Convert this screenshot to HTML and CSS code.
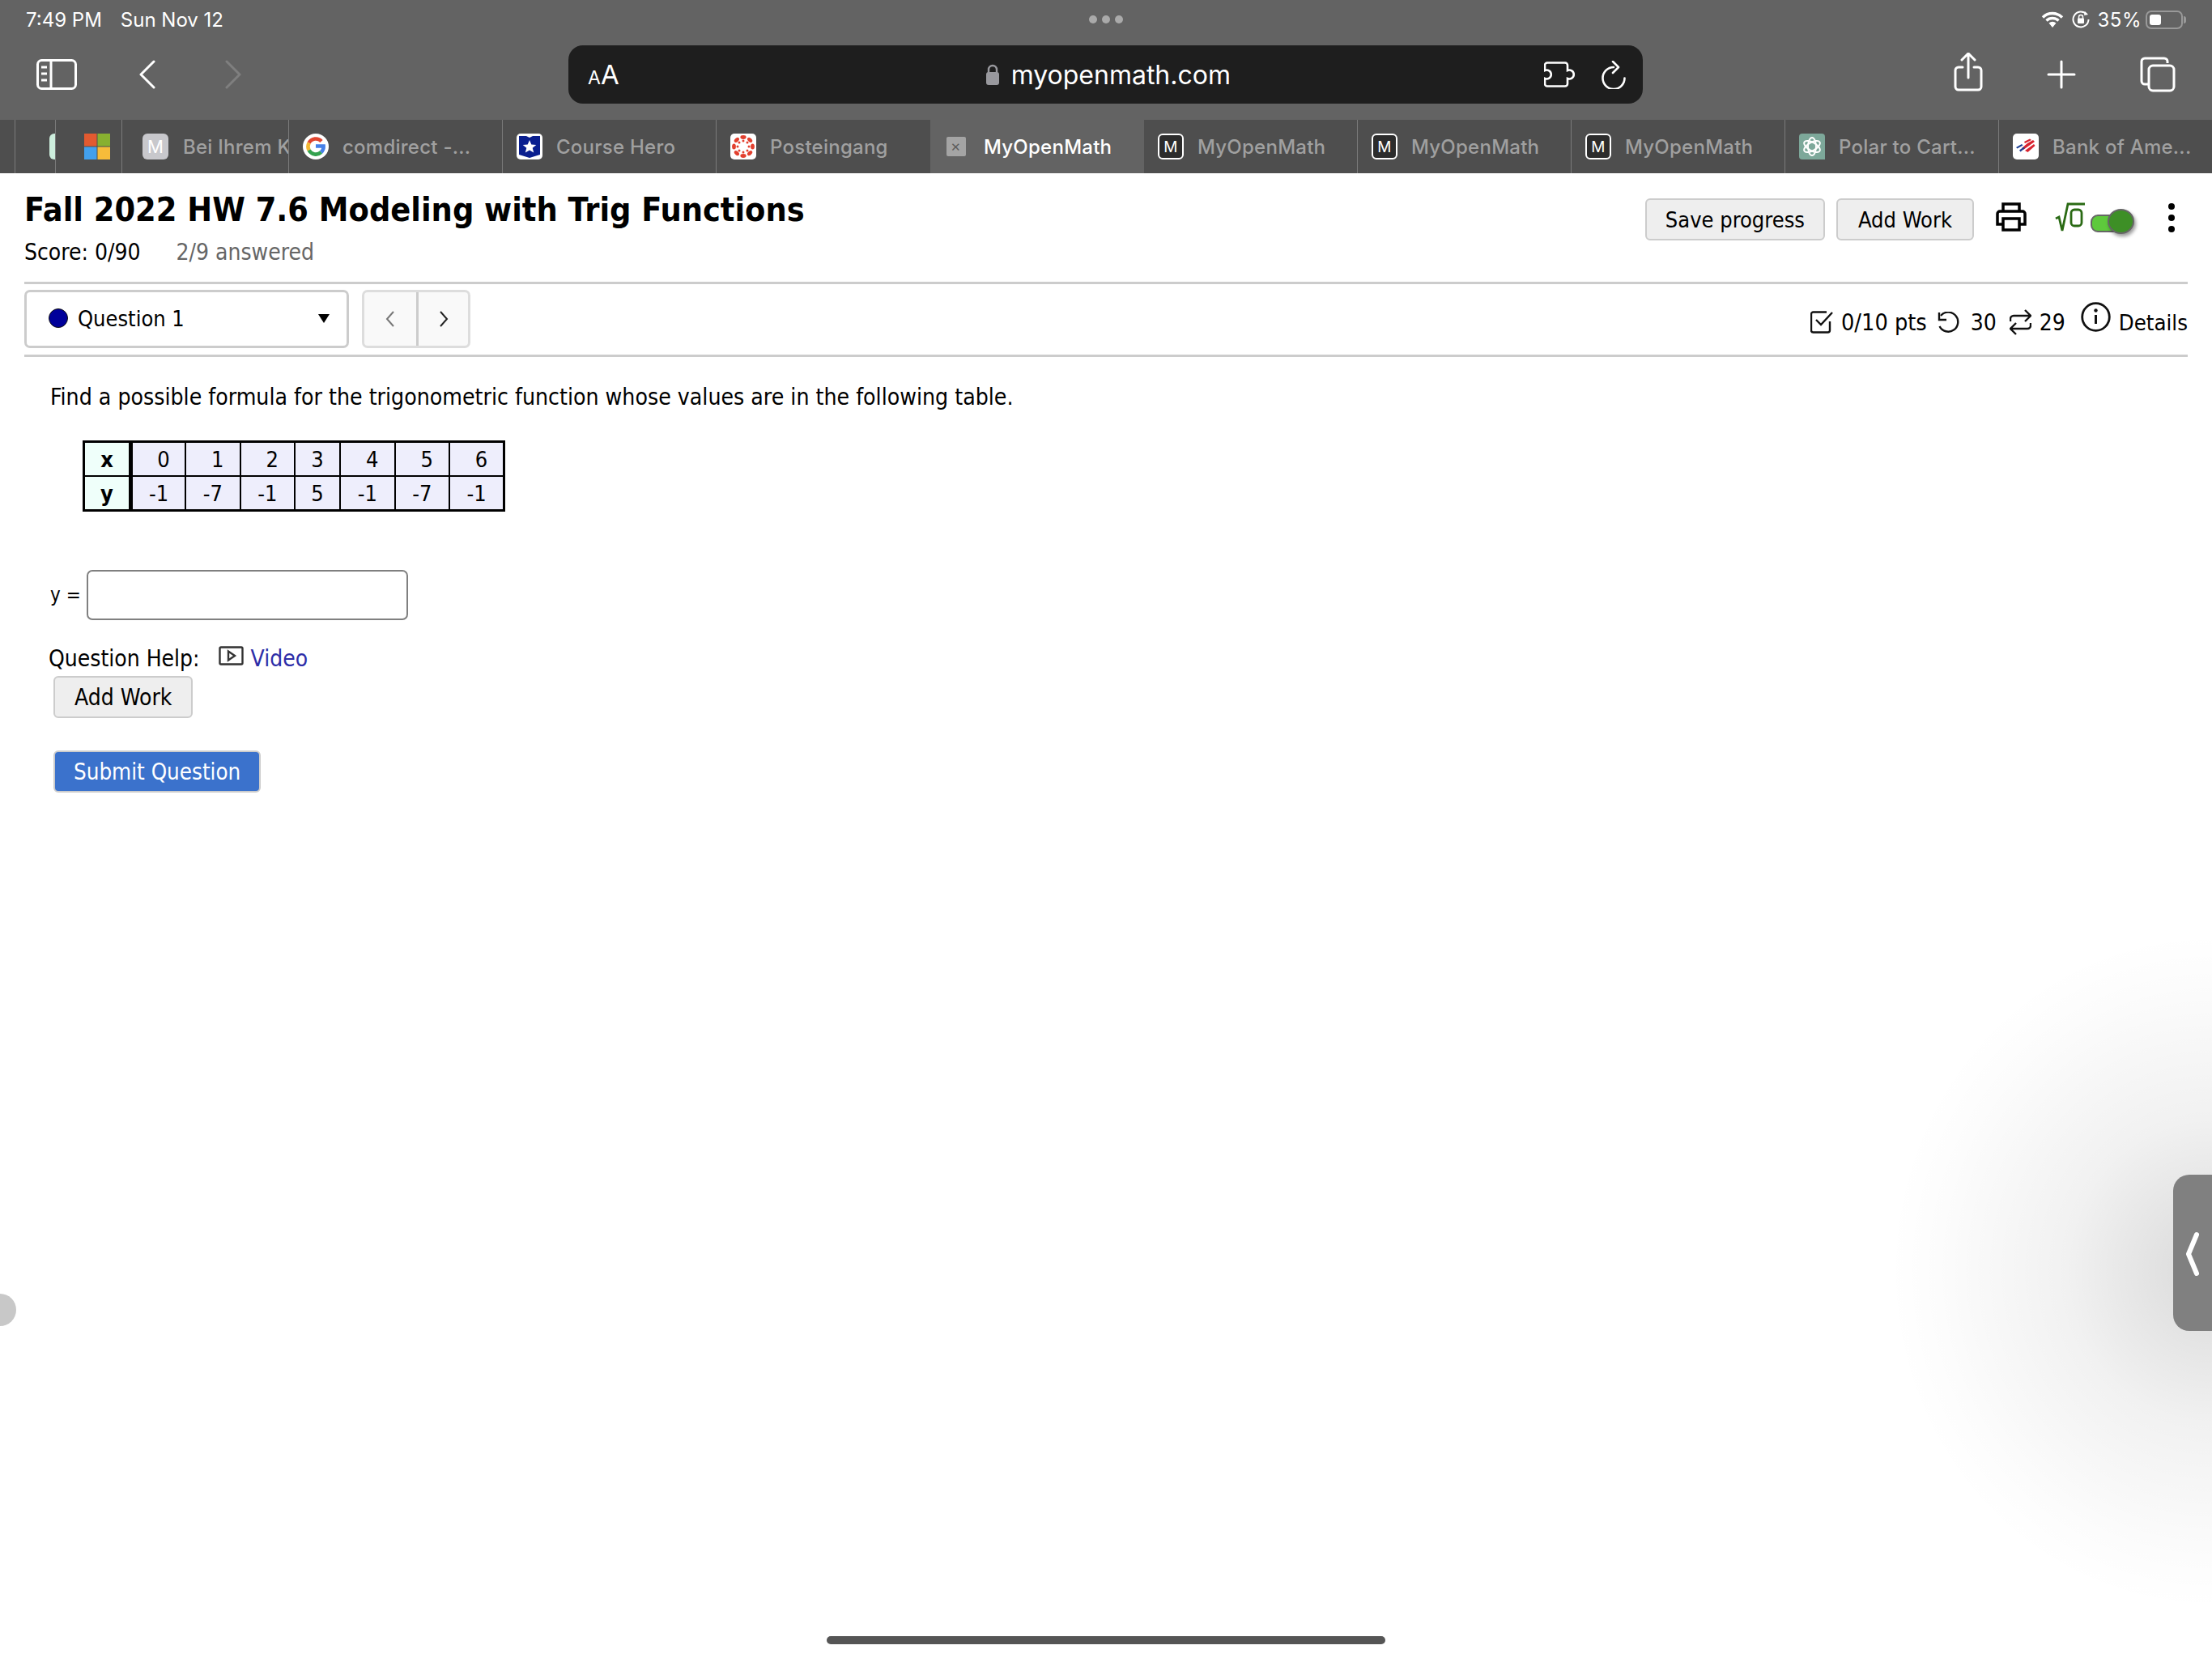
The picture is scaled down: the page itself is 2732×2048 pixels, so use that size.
FILE: index.html
```html
<!DOCTYPE html>
<html lang="en">
  <head>
    <meta charset="UTF-8">
    <title>MyOpenMath</title>
    <link rel="stylesheet" href="styles.css">
  </head>
  <body>
    <div class="browser">
      <div class="status">
        <span class="clock">7:49 PM</span>
        <span class="date">Sun Nov 12</span>
        <div class="dots"><i></i><i></i><i></i></div>
        <div class="status-right">
          <svg class="wifi" width="28" height="20" viewBox="0 0 28 20"><path d="M2 7.500a17 17 0 0 1 24 0M6.500 11.500a11 11 0 0 1 15 0" fill="none" stroke="#fff" stroke-width="3.400"/><path d="M9.500 14.500a7 7 0 0 1 9 0L14 20z" fill="#fff"/></svg>
          <svg class="rotlock" width="22" height="22" viewBox="0 0 22 22"><path d="M18 4.500A9.500 9.500 0 1 0 20.500 11" fill="none" stroke="#fff" stroke-width="2"/><path d="M16 1l4 4-5 1z" fill="#fff"/><rect x="7" y="9.500" width="8" height="6.500" rx="1" fill="#fff"/><path d="M8.500 10V8a2.500 2.500 0 0 1 5 0v2" fill="none" stroke="#fff" stroke-width="1.500"/></svg>
          <span class="percent">35%</span>
          <div class="battery"><b></b></div>
        </div>
      </div>

      <div class="toolbar">
        <div class="tool-left">
          <svg width="50" height="38" viewBox="0 0 50 38"><rect x="1.500" y="1.500" width="47" height="35" rx="5" fill="none" stroke="#fff" stroke-width="3"/><path d="M18 2v34M6 10h7M6 18h7M6 26h7" stroke="#fff" stroke-width="3"/></svg>
          <svg class="back" width="20" height="36" viewBox="0 0 20 36"><path d="M18 2L2 18l16 16" fill="none" stroke="#fff" stroke-width="3" stroke-linecap="round" stroke-linejoin="round"/></svg>
          <svg class="forward" width="20" height="36" viewBox="0 0 20 36"><path d="M2 2l16 16L2 34" fill="none" stroke="#7f7f7f" stroke-width="3" stroke-linecap="round" stroke-linejoin="round"/></svg>
        </div>
        <div class="urlbar">
          <span class="aa"><small>A</small>A</span>
          <div class="url">
            <svg width="18" height="26" viewBox="0 0 18 26"><rect x="1" y="10" width="16" height="16" rx="3" fill="#98989d"/><path d="M4 11V7a5 5 0 0 1 10 0v4" fill="none" stroke="#98989d" stroke-width="2.400"/></svg>
            <span>myopenmath.com</span>
          </div>
          <svg class="puzzle" width="41" height="32" viewBox="0 0 41 32"><path d="M4 1.500H26a3 3 0 0 1 3 3V11a5.500 5.500 0 1 1 0 10v6.500a3 3 0 0 1-3 3H4a3 3 0 0 1-3-3V21a5.500 5.500 0 1 0 0-10V4.500a3 3 0 0 1 3-3z" fill="none" stroke="#fff" stroke-width="2.600"/></svg>
          <svg class="reload" width="31" height="35" viewBox="0 0 31 35"><path d="M16 8A13.500 13.500 0 1 0 29.500 21.500" fill="none" stroke="#fff" stroke-width="2.600" stroke-linecap="round"/><path d="M15 1l7 7-7 7" fill="none" stroke="#fff" stroke-width="2.600" stroke-linecap="round" stroke-linejoin="round"/></svg>
        </div>
        <div class="tool-right">
          <svg width="36" height="48" viewBox="0 0 36 48"><path d="M11 18H6a4 4 0 0 0-4 4v20a4 4 0 0 0 4 4h24a4 4 0 0 0 4-4V22a4 4 0 0 0-4-4h-5M18 31V2M10 9l8-8 8 8" fill="none" stroke="#fff" stroke-width="3" stroke-linecap="round" stroke-linejoin="round"/></svg>
          <svg class="plus" width="36" height="36" viewBox="0 0 36 36"><path d="M18 2v32M2 18h32" stroke="#fff" stroke-width="3" stroke-linecap="round"/></svg>
          <svg class="copies" width="44" height="44" viewBox="0 0 44 44"><path d="M34 8V6a4 4 0 0 0-4-4H6a4 4 0 0 0-4 4v24a4 4 0 0 0 4 4h4" fill="none" stroke="#fff" stroke-width="3"/><rect x="11" y="11" width="31" height="31" rx="5" fill="none" stroke="#fff" stroke-width="3"/></svg>
        </div>
      </div>

      <div class="tabs">
        <div class="tab stub-a"></div>
        <div class="tab stub-b"><i class="sliver"></i></div>
        <div class="tab stub-c">
          <svg class="fav" width="32" height="32" viewBox="0 0 32 32"><path fill="#e25a30" d="M0 0h15.500v15.500H0z"/><path fill="#88b030" d="M16.500 0H32v15.500H16.500z"/><path fill="#42a0ee" d="M0 16.500h15.500V32H0z"/><path fill="#f6bc3a" d="M16.500 16.500H32V32H16.500z"/></svg>
        </div>
        <div class="tab stub-d">
          <span class="fav letter grey">M</span>
          <span class="name cut">Bei Ihrem K</span>
        </div>
        <div class="tab">
          <svg class="fav" width="32" height="32" viewBox="0 0 32 32"><circle cx="16" cy="16" r="16" fill="#fff"/><path d="M23 9.500A9.600 9.600 0 0 0 7.600 11.500" fill="none" stroke="#e0452f" stroke-width="4.600"/><path d="M7.600 11.500a9.600 9.600 0 0 0 0 9" fill="none" stroke="#f2b632" stroke-width="4.600"/><path d="M7.600 20.500a9.600 9.600 0 0 0 15 2.500" fill="none" stroke="#34a24f" stroke-width="4.600"/><path d="M22.600 23a9.200 9.200 0 0 0 3-7.500H16" fill="none" stroke="#4680e8" stroke-width="4.600"/></svg>
          <span class="name">comdirect -...</span>
        </div>
        <div class="tab">
          <svg class="fav" width="32" height="32" viewBox="0 0 32 32"><rect width="32" height="32" rx="5" fill="#fff"/><path d="M3 3h9l4 2 4-2h9v23l-13 4-13-4z" fill="#0a1f8f"/><path d="M16 8l2.300 5.600 6 .4-4.600 3.800 1.500 5.800L16 20.400l-5.200 3.200 1.500-5.800L7.700 14l6-.4z" fill="#fff"/></svg>
          <span class="name">Course Hero</span>
        </div>
        <div class="tab">
          <svg class="fav" width="32" height="32" viewBox="0 0 32 32"><rect width="32" height="32" rx="5" fill="#fff"/><g fill="#e2402f"><ellipse cx="16" cy="4.500" rx="3.600" ry="2.400"/><ellipse cx="16" cy="4.500" rx="3.600" ry="2.400" transform="rotate(45 16 16)"/><ellipse cx="16" cy="4.500" rx="3.600" ry="2.400" transform="rotate(90 16 16)"/><ellipse cx="16" cy="4.500" rx="3.600" ry="2.400" transform="rotate(135 16 16)"/><ellipse cx="16" cy="4.500" rx="3.600" ry="2.400" transform="rotate(180 16 16)"/><ellipse cx="16" cy="4.500" rx="3.600" ry="2.400" transform="rotate(225 16 16)"/><ellipse cx="16" cy="4.500" rx="3.600" ry="2.400" transform="rotate(270 16 16)"/><ellipse cx="16" cy="4.500" rx="3.600" ry="2.400" transform="rotate(315 16 16)"/><circle cx="16" cy="9" r="1.500"/><circle cx="16" cy="23" r="1.500"/><circle cx="9" cy="16" r="1.500"/><circle cx="23" cy="16" r="1.500"/><circle cx="11" cy="11" r="1.500"/><circle cx="21" cy="11" r="1.500"/><circle cx="11" cy="21" r="1.500"/><circle cx="21" cy="21" r="1.500"/></g></svg>
          <span class="name">Posteingang</span>
        </div>
        <div class="tab active">
          <span class="fav letter close">&#10005;</span>
          <span class="name">MyOpenMath</span>
        </div>
        <div class="tab no-line">
          <span class="fav letter boxed">M</span>
          <span class="name">MyOpenMath</span>
        </div>
        <div class="tab">
          <span class="fav letter boxed">M</span>
          <span class="name">MyOpenMath</span>
        </div>
        <div class="tab">
          <span class="fav letter boxed">M</span>
          <span class="name">MyOpenMath</span>
        </div>
        <div class="tab">
          <svg class="fav" width="32" height="32" viewBox="0 0 32 32"><path d="M4 0h24a4 4 0 0 1 4 4v28H4a4 4 0 0 1-4-4V4a4 4 0 0 1 4-4z" fill="#7da89a"/><g fill="none" stroke="#fff" stroke-width="1.900"><ellipse cx="16" cy="16" rx="5" ry="11"/><ellipse cx="16" cy="16" rx="5" ry="11" transform="rotate(60 16 16)"/><ellipse cx="16" cy="16" rx="5" ry="11" transform="rotate(120 16 16)"/></g></svg>
          <span class="name">Polar to Cart...</span>
        </div>
        <div class="tab">
          <svg class="fav" width="32" height="32" viewBox="0 0 32 32"><rect width="32" height="32" rx="5" fill="#fff"/><path d="M14 10l7-3.500 2 1.500-8 4zM18 12l7-4 2 2-14 10-2-2zM15 21l11-8 1.500 2-9 8z" fill="#d8232f"/><path d="M4 17l7-4 1.500 1.500-7 4zM8 20.500l5.500-4 1.500 1.500-5.500 4.500z" fill="#1c3f94"/></svg>
          <span class="name">Bank of Ame...</span>
        </div>
      </div>
    </div>

    <main class="page">
      <div class="head">
        <div>
          <h1>Fall 2022 HW 7.6 Modeling with Trig Functions</h1>
          <p class="score">Score: 0/90 <span>2/9 answered</span></p>
        </div>
        <div class="head-tools">
          <button class="btn save">Save progress</button>
          <button class="btn">Add Work</button>
          <svg class="printer" width="38" height="36" viewBox="0 0 38 36"><path d="M9 12V2h20v10M9 27H2V14a3 3 0 0 1 3-3h28a3 3 0 0 1 3 3v13h-7" fill="none" stroke="#000" stroke-width="3.500"/><rect x="9" y="20" width="20" height="14" fill="none" stroke="#000" stroke-width="3.500"/></svg>
          <span class="mathtoggle">
            <svg width="38" height="36" viewBox="0 0 38 36"><path d="M1 20l4-2 4 17L16 2h21" fill="none" stroke="#2a6a14" stroke-width="2.800"/><rect x="20" y="9" width="13" height="20" rx="4" fill="none" stroke="#2a6a14" stroke-width="2.800"/></svg>
            <span class="switch"><b></b></span>
          </span>
          <svg class="more" width="8" height="38" viewBox="0 0 8 38"><circle cx="4" cy="5" r="4"/><circle cx="4" cy="19" r="4"/><circle cx="4" cy="33" r="4"/></svg>
        </div>
      </div>

      <div class="qbar">
        <div class="select">
          <i class="qdot"></i>
          <span>Question 1</span>
          <span class="caret"></span>
        </div>
        <div class="pager">
          <span class="prev"><svg width="12" height="20" viewBox="0 0 12 20"><path d="M10 1L2 10l8 9" fill="none" stroke="#777" stroke-width="2"/></svg></span>
          <span class="next"><svg width="12" height="20" viewBox="0 0 12 20"><path d="M2 1l8 9-8 9" fill="none" stroke="#222" stroke-width="2"/></svg></span>
        </div>
        <div class="qmeta">
          <svg width="28" height="28" viewBox="0 0 28 28"><path d="M24 13v11a2.500 2.500 0 0 1-2.500 2.500h-18A2.500 2.500 0 0 1 1 24V4a2.500 2.500 0 0 1 2.500-2.500H20" fill="none" stroke="#111" stroke-width="2.400"/><path d="M7 11l6 6L27 2" fill="none" stroke="#111" stroke-width="2.400"/></svg>
          <span class="pts">0/10 pts</span>
          <svg width="30" height="27" viewBox="0 0 30 27"><path d="M5 5a12 12 0 1 1-1.500 13" fill="none" stroke="#111" stroke-width="2.400"/><path d="M3 1v9h9" fill="none" stroke="#111" stroke-width="2.400"/></svg>
          <span class="tries">30</span>
          <svg width="27" height="32" viewBox="0 0 27 32"><path d="M1 15v-3a4 4 0 0 1 4-4h20M19 1l7 7-7 7M26 17v3a4 4 0 0 1-4 4H2M8 17l-7 7 7 7" fill="none" stroke="#111" stroke-width="2.400"/></svg>
          <span class="tries last">29</span>
          <svg class="info" width="37" height="37" viewBox="0 0 37 37"><circle cx="18.500" cy="18.500" r="16.800" fill="none" stroke="#111" stroke-width="2.800"/><path d="M18.500 16v11" stroke="#111" stroke-width="3"/><circle cx="18.500" cy="10.500" r="2.200" fill="#111"/></svg>
          <span class="details">Details</span>
        </div>
      </div>

      <div class="question">
        <p class="prompt">Find a possible formula for the trigonometric function whose values are in the following table.</p>
        <table class="values">
          <tr>
            <th>x</th>
            <td class="shift">0</td><td class="shift">1</td><td class="shift">2</td><td class="narrow">3</td><td class="shift">4</td><td class="shift">5</td><td class="shift">6</td>
          </tr>
          <tr>
            <th>y</th>
            <td>-1</td><td>-7</td><td>-1</td><td class="narrow">5</td><td>-1</td><td>-7</td><td>-1</td>
          </tr>
        </table>
        <div class="answer">
          <span>y =</span>
          <input type="text" class="field">
        </div>
        <div class="help">
          <span>Question Help:</span>
          <svg width="31" height="24" viewBox="0 0 31 24"><rect x="1.500" y="1.500" width="28" height="21" rx="1.500" fill="none" stroke="#333" stroke-width="2.400"/><path d="M12 6.500l8 5.500-8 5.500z" fill="none" stroke="#333" stroke-width="2.400"/></svg>
          <a href="#video">Video</a>
        </div>
        <button class="btn add-work">Add Work</button>
        <button class="btn submit">Submit Question</button>
      </div>
    </main>

    <div class="side-glow"></div>
    <div class="side-tab"><svg width="18" height="56" viewBox="0 0 18 56"><path d="M14 4L4 28l10 24" fill="none" stroke="#fff" stroke-width="6" stroke-linecap="round" stroke-linejoin="round"/></svg></div>
    <div class="left-nub"></div>
    <div class="home-bar"></div>
  </body>
</html>
```

FILE: styles.css
```css
* {
  box-sizing: border-box;
}

html, body {
  margin: 0;
  background: #fff;
}
body {
  height: 2048px;
  overflow: hidden;
  position: relative;
  color: #000;
  font-family: "DejaVu Sans Condensed", "DejaVu Sans", sans-serif;
  font-size: 28px;
}
p, h1 {
  margin: 0;
}
svg {
  display: block;
  flex: none;
}

/* browser chrome */
.browser {
  background: #636363;
  color: #fff;
  font-family: Inter, sans-serif;
}
.status {
  display: flex;
  align-items: center;
  height: 48px;
  padding: 0 36px 0 32px;
  font-size: 24px;
  position: relative;
}
.date {
  margin-left: 23px;
}
.dots {
  display: flex;
  gap: 6px;
  position: absolute;
  left: 1345px;
  top: 19px;
}
.dots i {
  width: 10px;
  height: 10px;
  border-radius: 50%;
  background: #aaa;
}
.status-right {
  margin-left: auto;
  display: flex;
  align-items: center;
}
.rotlock {
  margin: 0 10px;
}
.percent {
  letter-spacing: .5px;
}
.battery {
  width: 46px;
  height: 23px;
  margin-left: 5px;
  padding: 3px;
  border: 2px solid #999;
  border-radius: 7px;
  position: relative;
}
.battery::after {
  content: "";
  position: absolute;
  right: -6px;
  top: 5px;
  width: 3px;
  height: 9px;
  border-radius: 0 3px 3px 0;
  background: #999;
}
.battery b {
  display: block;
  width: 14px;
  height: 13px;
  background: #fff;
  border-radius: 3px;
}
.toolbar {
  display: flex;
  align-items: center;
  height: 100px;
  padding-bottom: 12px;
}
.tool-left {
  display: flex;
  align-items: center;
  width: 702px;
  padding-left: 45px;
}
.back {
  margin-left: 77px;
}
.forward {
  margin-left: 86px;
}
.urlbar {
  width: 1327px;
  height: 72px;
  background: #1e1e1e;
  border-radius: 18px;
  display: flex;
  align-items: center;
  padding: 0 21px 0 24px;
}
.aa {
  font-size: 33px;
  width: 40px;
  line-height: 1;
}
.aa small {
  font-size: 23px;
}
.url {
  display: flex;
  align-items: center;
  gap: 14px;
  margin-left: 451px;
  font-size: 32px;
}
.puzzle {
  margin-left: 387px;
}
.reload {
  margin-left: 29px;
}
.tool-right {
  display: flex;
  align-items: center;
  padding-left: 384px;
}
.tool-right svg:first-child {
  margin-top: -6px;
}
.plus {
  margin-left: 79px;
}
.copies {
  margin-left: 79px;
}
.tabs {
  display: flex;
  height: 66px;
  background: #4e4e4e;
  font-size: 24px;
  font-weight: 500;
  letter-spacing: .25px;
}
.tab {
  display: flex;
  align-items: center;
  flex: none;
  width: 264px;
  padding-left: 17px;
  border-right: 1px solid #7a7a7a;
  overflow: hidden;
  white-space: nowrap;
}
.tab:last-child {
  border-right: 0;
}
.tab:nth-child(7) {
  border-right: 0;
}
.stub-a {
  width: 19px;
  padding: 0;
}
.stub-b {
  width: 50px;
  padding-left: 42px;
}
.stub-c {
  width: 82px;
  padding-left: 35px;
}
.stub-d {
  width: 206px;
  padding-left: 25px;
}
.sliver {
  width: 12px;
  height: 32px;
  background: #cdeedd;
  border-radius: 6px 0 0 6px;
}
.fav {
  flex: none;
  width: 32px;
  height: 32px;
}
.name {
  margin-left: 17px;
  color: #a0a0a0;
}
.cut {
  margin-left: 18px;
}
.tab.active {
  background: #636363;
  border-right: 0;
  padding-left: 20px;
}
.tab.active .name {
  color: #fff;
  margin-left: 22px;
}
.letter {
  display: flex;
  align-items: center;
  justify-content: center;
  border-radius: 6px;
  font-size: 19px;
  font-weight: 400;
}
.grey {
  background: #c8c8cc;
  color: #fff;
  font-size: 22px;
}
.close {
  background: #a4a4a4;
  color: #5c5c5c;
  width: 24px;
  height: 24px;
  border-radius: 2px;
  font-size: 15px;
}
.boxed {
  background: #2c2c2c;
  border: 2px solid #fff;
  color: #fff;
}

/* page */
.page {
  padding: 0 30px;
}
.head {
  display: flex;
  justify-content: space-between;
  height: 137px;
  border-bottom: 3px solid #ccc;
}
h1 {
  margin-top: 20px;
  font-size: 41px;
  line-height: 50px;
  font-weight: bold;
}
.score {
  margin-top: 12px;
  line-height: 32px;
}
.score span {
  margin-left: 36px;
  color: #666;
}
.head-tools {
  display: flex;
  align-items: flex-start;
  padding-top: 31px;
  font-size: 27px;
}
.btn {
  height: 52px;
  padding: 0 25px;
  margin: 0;
  border: 2px solid #ccc;
  border-radius: 6px;
  background: #eee;
  color: #000;
  font: inherit;
}
.btn.save {
  padding: 0 23px;
}
.head-tools .btn + .btn {
  margin-left: 14px;
}
.printer {
  margin: 5px 0 0 27px;
}
.mathtoggle {
  display: flex;
  margin: 5px 0 0 35px;
}
.switch {
  display: block;
  position: relative;
  width: 54px;
  height: 18px;
  margin: 15px 0 0 6px;
}
.switch::before {
  content: "";
  position: absolute;
  left: 0;
  top: 0;
  width: 38px;
  height: 18px;
  border: 2px solid #666;
  border-radius: 9px;
  background: #5ec93c;
}
.switch b {
  position: absolute;
  left: 21px;
  top: -7px;
  width: 33px;
  height: 31px;
  border: 2px solid #666;
  border-radius: 50%;
  background: #3d8f26;
  box-shadow: 2px 3px 4px rgba(0, 0, 0, .4);
}
.more {
  margin: 5px 16px 0 42px;
}
.qbar {
  display: flex;
  align-items: center;
  height: 90px;
  border-bottom: 3px solid #ccc;
  padding-bottom: 2px;
}
.select {
  display: flex;
  align-items: center;
  width: 401px;
  height: 72px;
  padding: 0 21px 0 27px;
  border: 3px solid #ccc;
  border-radius: 7px;
  font-size: 27px;
}
.qdot {
  width: 24px;
  height: 24px;
  margin: -2px 12px 0 0;
  border-radius: 50%;
  background: #00009a;
  border: 1px solid #111;
}
.caret {
  margin-left: auto;
  border-left: 7px solid transparent;
  border-right: 7px solid transparent;
  border-top: 11px solid #000;
}
.pager {
  display: flex;
  height: 72px;
  margin-left: 16px;
  border: 3px solid #ddd;
  border-radius: 7px;
  background: #f9f9f9;
}
.pager span {
  display: flex;
  align-items: center;
  justify-content: center;
  width: 64px;
}
.pager .next {
  border-left: 3px solid #ccc;
}
.qmeta {
  display: flex;
  align-items: center;
  margin-left: auto;
  padding-top: 9px;
}
.pts {
  margin: 0 12px 0 10px;
  font-size: 28.6px;
}
.tries {
  margin: 0 16px 0 12px;
}
.tries.last {
  margin: 0 19px 0 10px;
}
.info {
  margin: -14px 10px 0 0;
}
.details {
  font-size: 27.3px;
}
.prompt {
  margin: 34px 0 0 32px;
  font-size: 28.2px;
  line-height: 32px;
}
.values {
  margin: 37px 0 0 72px;
  border-collapse: collapse;
  border: 3px solid #000;
  line-height: 38px;
  text-align: center;
  font-size: 27px;
}
.values th {
  width: 58px;
  height: 42px;
  padding: 2px 0 0;
  background: #effffa;
  border: 2px solid #000;
  border-right: 5px solid #000;
  font-weight: 600;
}
.values td {
  width: 67.5px;
  height: 42px;
  padding: 2px 0 0;
  background: #eeeefc;
  border: 2px solid #000;
}
.values .narrow {
  width: 56px;
}
.values .shift {
  padding-left: 12px;
}
.answer {
  display: flex;
  align-items: center;
  gap: 7px;
  margin: 72px 0 0 32px;
}
.answer span {
  font-size: 24px;
}
.field {
  width: 397px;
  height: 62px;
  border: 2px solid #808080;
  border-radius: 7px;
  background: #fff;
}
.help {
  display: flex;
  align-items: center;
  margin: 27px 0 0 30px;
  height: 40px;
}
.help svg {
  margin: -6px 9px 0 23px;
}
.help a {
  color: #2e2ea8;
  text-decoration: none;
}
.add-work {
  display: block;
  margin: 2px 0 0 36px;
  padding: 0 24px;
}
.submit {
  display: block;
  margin: 40px 0 0 36px;
  padding: 0 23px;
  background: #3b72cc;
  color: #fff;
  font-size: 27.5px;
}

/* overlays */
.side-glow {
  position: absolute;
  right: 0;
  top: 1150px;
  width: 400px;
  height: 840px;
  background: radial-gradient(ellipse 400px 420px at 100% 50%, rgba(0, 0, 0, .15), rgba(0, 0, 0, .055) 45%, rgba(0, 0, 0, .01) 85%, rgba(0, 0, 0, 0));
}
.side-tab {
  position: absolute;
  right: 0;
  top: 1451px;
  width: 48px;
  height: 193px;
  padding: 70px 0 0 15px;
  background: #808080;
  border-radius: 20px 0 0 20px;
}
.left-nub {
  position: absolute;
  left: -20px;
  top: 1598px;
  width: 40px;
  height: 40px;
  border-radius: 50%;
  background: #c8c8c8;
}
.home-bar {
  position: absolute;
  left: 1021px;
  top: 2021px;
  width: 690px;
  height: 10px;
  border-radius: 5px;
  background: #555;
}
```
